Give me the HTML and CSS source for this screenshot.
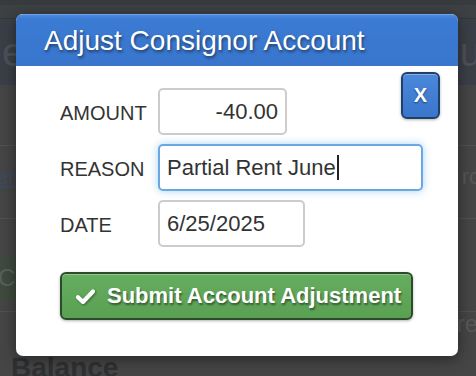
FILE: index.html
```html
<!DOCTYPE html>
<html>
<head>
<meta charset="utf-8">
<link rel="stylesheet" href="styles.css">
</head>
<body>
<div class="page">
  <div class="topbar"></div>
  <div class="subbar"></div>
  <div class="titleband"><span class="bigl">e</span><span class="bigr">u</span></div>
  <div class="content">
    <div class="rowline r1"></div>
    <div class="linkrow"><span class="lnk">en</span><span class="rc">rc</span></div>
    <div class="rowline r2"></div>
    <div class="greenrow"><span class="co">Co</span></div>
    <div class="rowline r3"></div>
    <div class="balrow"><span class="bal">Balance</span><span class="re">re</span></div>
  </div>
</div>

<div class="modal">
  <div class="modal-head">Adjust Consignor Account</div>
  <button class="close-btn">X</button>
  <div class="modal-body">
    <div class="form">
      <label class="lbl">AMOUNT</label>
      <div class="field amount">-40.00</div>
      <label class="lbl">REASON</label>
      <div class="field reason focus">Partial Rent June<span class="caret"></span></div>
      <label class="lbl">DATE</label>
      <div class="field date">6/25/2025</div>
    </div>
    <button class="submit-btn"><svg class="check" width="19" height="15" viewBox="0 0 19 15"><path d="M2 8.2 L7 13 L17 2.5" fill="none" stroke="#fff" stroke-width="4.2" stroke-linecap="round" stroke-linejoin="round"/></svg>Submit Account Adjustment</button>
  </div>
</div>
</body>
</html>
```
FILE: styles.css
```css
html, body {
  margin: 0;
  padding: 0;
}
body {
  width: 476px;
  height: 376px;
  overflow: hidden;
  background: #434445;
  font-family: "Liberation Sans", Arial, sans-serif;
  position: relative;
}
.page {
  display: flex;
  flex-direction: column;
  height: 376px;
}
.topbar {
  height: 5px;
  background: #373b3d;
}
.subbar {
  height: 13px;
  background: #3d4143;
  border-bottom: 1px solid #34373a;
}
.titleband {
  height: 66px;
  background: #3a3f47;
  display: flex;
  justify-content: space-between;
  align-items: center;
  color: #4d5056;
  font-size: 40px;
  overflow: hidden;
}
.bigl { margin-left: 2px; }
.bigr { margin-right: -6px; }
.content {
  flex: 1;
  display: flex;
  flex-direction: column;
  background: #454546;
}
.rowline {
  height: 1px;
  background: #505152;
}
.r1 { margin-top: 60px; }
.linkrow {
  height: 62px;
  display: flex;
  justify-content: space-between;
  align-items: center;
  font-size: 22px;
}
.lnk {
  color: #3b4a5f;
  text-decoration: underline;
  margin-left: -4px;
}
.rc {
  color: #555658;
  margin-right: -4px;
}
.r2 { margin-top: 10px; }
.greenrow {
  margin-top: 36px;
  height: 46px;
  background: #3e4a3d;
  display: flex;
  align-items: center;
  font-size: 24px;
  width: 60px;
}
.co {
  color: #55605a;
  margin-left: -2px;
}
.r3 { margin-top: 10px; }
.balrow {
  flex: 1;
  display: flex;
  justify-content: space-between;
  align-items: flex-end;
}
.bal {
  color: #2f3032;
  font-weight: bold;
  font-size: 28px;
  margin-left: 11px;
  margin-bottom: -8px;
}
.re {
  color: #565758;
  font-size: 24px;
  align-self: flex-start;
  margin-top: -2px;
  margin-right: -2px;
}

.modal {
  position: absolute;
  left: 16px;
  top: 14px;
  width: 442px;
  height: 342px;
  background: #fff;
  border-radius: 7px;
  overflow: hidden;
  box-shadow: 0 3px 14px rgba(0,0,0,0.45);
}
.modal-head {
  height: 52px;
  box-sizing: border-box;
  background: linear-gradient(#4a8be0, #3b7bd4 8%, #3975cc);
  border-top: 1px solid #6ea2e8;
  color: #fff;
  font-size: 28px;
  line-height: 52px;
  padding-left: 28px;
  text-shadow: 1px 2px 3px rgba(0,0,0,0.5);
}
.close-btn {
  position: absolute;
  left: 385px;
  top: 58px;
  width: 39px;
  height: 47px;
  box-sizing: border-box;
  border: 2px solid #1f3f6d;
  border-radius: 6px;
  background: linear-gradient(#4a88da, #3a76cc);
  box-shadow: inset 0 1px 0 rgba(255,255,255,0.35), 0 1px 3px rgba(0,0,0,0.3);
  color: #fff;
  font-family: "Liberation Sans", Arial, sans-serif;
  font-weight: bold;
  font-size: 20px;
  padding: 0;
  text-shadow: 0 1px 2px rgba(0,0,0,0.5);
}
.modal-body {
  padding: 22px 0 0 44px;
}
.form {
  display: grid;
  grid-template-columns: 98px auto;
  row-gap: 9px;
  align-items: center;
  justify-items: start;
}
.lbl {
  font-size: 20px;
  color: #333;
  padding-top: 4px;
}
.field {
  height: 47px;
  box-sizing: border-box;
  border: 2px solid #cccccc;
  border-radius: 5px;
  font-size: 22px;
  color: #333;
  line-height: 44px;
  padding: 0 7px;
  background: #fff;
}
.amount {
  width: 129px;
  text-align: right;
}
.reason {
  width: 265px;
  border-color: #6aa8e4;
  box-shadow: 0 0 8px rgba(102,175,233,0.55);
}
.caret {
  display: inline-block;
  width: 2px;
  height: 25px;
  background: #222;
  vertical-align: -5px;
  margin-left: 1px;
}
.date {
  width: 147px;
}
.submit-btn {
  margin-top: 25px;
  width: 353px;
  height: 48px;
  box-sizing: border-box;
  border: 2px solid #2c4b2b;
  border-radius: 6px;
  background: linear-gradient(#65ad5f, #5aa053);
  box-shadow: inset 0 1px 0 rgba(255,255,255,0.3), 0 1px 3px rgba(0,0,0,0.3);
  color: #fff;
  font-family: "Liberation Sans", Arial, sans-serif;
  font-weight: bold;
  font-size: 22px;
  text-shadow: 1px 2px 2px rgba(0,0,0,0.45);
  display: flex;
  align-items: center;
  padding: 0 0 0 14px;
  gap: 12px;
}
.check {
  filter: drop-shadow(1px 1px 1px rgba(0,0,0,0.4));
}
```
